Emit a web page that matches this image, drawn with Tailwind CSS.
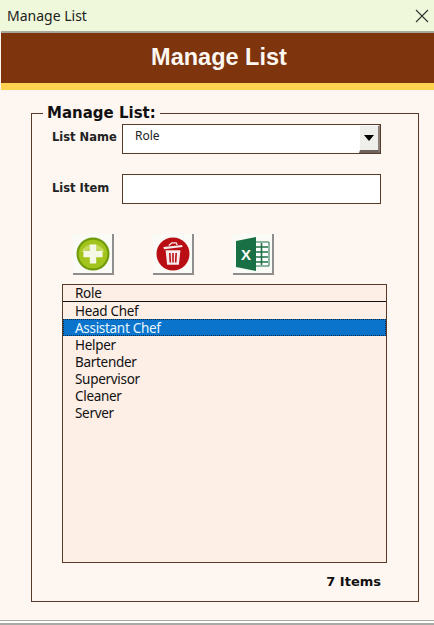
<!DOCTYPE html>
<html lang="en">
<head>
    <meta charset="UTF-8">
    <meta name="viewport" content="width=device-width, initial-scale=1.0">
    <title>Manage List</title>
    <script src="https://cdn.jsdelivr.net/npm/@tailwindcss/browser@4"></script>
</head>
<body class="bg-[#fdf6f1] w-[434px] h-[625px] overflow-hidden flex flex-col">
    <!-- window title bar -->
    <div class="h-[31px] shrink-0 bg-[#eff8da] flex items-center justify-between pl-[7px] pr-[5px] font-['Noto_Sans',sans-serif] text-[14px] text-[#222]">
        <span>Manage List</span>
        <svg class="w-[14px] h-[14px]" viewBox="0 0 14 14" fill="none" stroke="#333" stroke-width="1.1">
            <path d="M1 1 L13 13 M13 1 L1 13"/>
        </svg>
    </div>
    <div class="h-[2px] shrink-0 ml-[1px] bg-[#a8a89e]"></div>

    <!-- banner -->
    <div class="h-[50px] shrink-0 ml-[1px] pl-[3px] bg-[#7e340c] flex items-center justify-center font-['Liberation_Sans',sans-serif] font-bold text-[23.5px] text-[#fdf7f2]">Manage List</div>
    <div class="h-[7px] shrink-0 ml-[1px] bg-[#ffd24f]"></div>

    <div class="flex-1 ml-[1px] pl-[30px] pr-[15px] pt-[14px] pb-[18px] flex flex-col font-['DejaVu_Sans',sans-serif]">
        <fieldset class="flex-1 min-h-0 border border-[#5a3a28] pl-[20px] pr-[31px] flex flex-col">
            <legend class="-ml-[9px] px-[4px] font-bold text-[15px] leading-[18px] text-[#111]">Manage List:</legend>

            <div class="flex items-center mt-[2px]">
                <label class="w-[70px] font-bold text-[11.5px] text-[#222] -mt-[2px]">List Name</label>
                <div class="w-[259px] h-[30px] border border-[#5a3a28] bg-white flex justify-between">
                    <span class="pl-[12px] pt-[3px] font-['Noto_Sans',sans-serif] text-[12px] leading-[16px] text-[#222]">Role</span>
                    <div class="w-[21px] bg-[#eeeeea] border-t border-l border-white border-b-[3px] border-b-[#6e625c] border-r-[2px] border-r-[#8a807a] flex items-center justify-center">
                        <svg class="w-[10px] h-[6px]" viewBox="0 0 10 6"><path d="M0 0 H10 L5 6 Z" fill="#000"/></svg>
                    </div>
                </div>
            </div>

            <div class="flex items-center mt-[20px]">
                <label class="w-[70px] font-bold text-[11.5px] text-[#222] -mt-[1px]">List Item</label>
                <input type="text" class="w-[259px] h-[30px] border border-[#5a3a28] bg-white">
            </div>

            <!-- action buttons -->
            <div class="flex gap-[39px] ml-[21px] mt-[30px]">
                <button class="w-[41px] h-[41px] bg-[#fafaf7] border-r-[2px] border-b-[2px] border-r-[#8e8e8e] border-b-[#8e8e8e] flex items-center justify-center">
                    <svg class="w-[34px] h-[34px]" viewBox="0 0 32 32">
                        <circle cx="16" cy="16" r="15.5" fill="#6f9a0a"/>
                        <circle cx="16" cy="16" r="13.5" fill="#a3c41c"/>
                        <path d="M5 14 A11.5 10 0 0 1 27 14 Q16 9 5 14 Z" fill="#c4da5c"/>
                        <path d="M13 7 H19 V13 H25 V19 H19 V25 H13 V19 H7 V13 H13 Z" fill="#f6f8e6"/>
                    </svg>
                </button>
                <button class="w-[41px] h-[41px] bg-[#fafaf7] border-r-[2px] border-b-[2px] border-r-[#8e8e8e] border-b-[#8e8e8e] flex items-center justify-center">
                    <svg class="w-[34px] h-[34px]" viewBox="0 0 32 32">
                        <circle cx="16" cy="16" r="15.5" fill="#b90f14"/>
                        <path d="M7 9.5 L24.5 7.5 L25 9.5 L7.5 11.5 Z" fill="#f7ecec"/>
                        <path d="M12 8 L15 5.5 H19 L20 7.5" fill="none" stroke="#f7ecec" stroke-width="1.2"/>
                        <path d="M9 12.5 H23 L21.5 26 H10.5 Z" fill="#f7ecec"/>
                        <path d="M13 15 L13.5 24 M16 15 V24 M19 15 L18.5 24" stroke="#b90f14" stroke-width="1.5"/>
                    </svg>
                </button>
                <button class="w-[41px] h-[41px] bg-[#fafaf7] border-r-[2px] border-b-[2px] border-r-[#8e8e8e] border-b-[#8e8e8e] flex items-center justify-center">
                    <svg class="w-[35px] h-[34px]" viewBox="0 0 35 34">
                        <path d="M20 5 H34 V29 H20 Z" fill="#fff" stroke="#1f7145" stroke-width="1"/>
                        <path d="M21 10 H33 M21 15 H33 M21 20 H33 M21 25 H33 M26.5 6 V28" stroke="#1f7145" stroke-width="1.6"/>
                        <path d="M1 4 L21 0 V34 L1 30 Z" fill="#1a7045"/>
                        <text x="11" y="23" text-anchor="middle" font-family="Liberation Sans, sans-serif" font-weight="700" font-size="15" fill="#fff">X</text>
                    </svg>
                </button>
            </div>

            <!-- list box -->
            <div class="w-[325px] ml-[10px] flex-1 min-h-0 mt-[9px] border border-[#5a3a28] bg-[#fdeee6] font-['Noto_Sans',sans-serif] text-[13.5px] tracking-[-0.3px] leading-[16px] text-[#111]">
                <div class="h-[17px] pl-[12px] border-b border-[#111]">Role</div>
                <div class="h-[17px] pl-[12px] pt-[1px]">Head Chef</div>
                <div class="h-[17px] pl-[12px] pt-[1px] bg-[#0a74cc] text-[#e8f6ff] outline-1 outline-dotted -outline-offset-1 outline-[#0b2a44]">Assistant Chef</div>
                <div class="h-[17px] pl-[12px] pt-[1px]">Helper</div>
                <div class="h-[17px] pl-[12px] pt-[1px]">Bartender</div>
                <div class="h-[17px] pl-[12px] pt-[1px]">Supervisor</div>
                <div class="h-[17px] pl-[12px] pt-[1px]">Cleaner</div>
                <div class="h-[17px] pl-[12px] pt-[1px]">Server</div>
            </div>

            <div class="h-[38px] mr-[6px] flex items-center justify-end font-bold text-[13px] text-[#111]">7 Items</div>
        </fieldset>
    </div>

    <div class="h-[1px] shrink-0 bg-[#a8a8a4]"></div>
    <div class="h-[2px] shrink-0 bg-white"></div>
    <div class="h-[2px] shrink-0 bg-[#a8a8a4]"></div>
</body>
</html>
